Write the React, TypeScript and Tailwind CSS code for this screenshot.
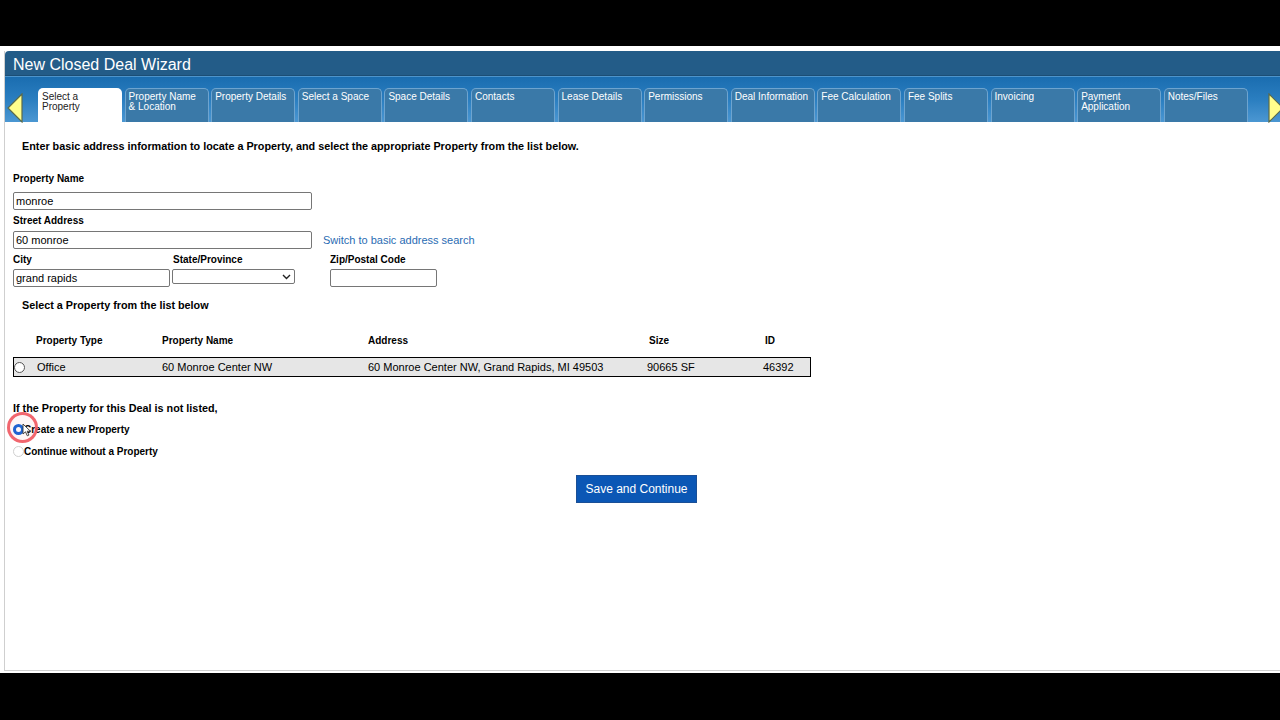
import React from 'react';

const tabs = [
  'Property Name\n& Location',
  'Property Details',
  'Select a Space',
  'Space Details',
  'Contacts',
  'Lease Details',
  'Permissions',
  'Deal Information',
  'Fee Calculation',
  'Fee Splits',
  'Invoicing',
  'Payment\nApplication',
  'Notes/Files',
];

function Radio({ checked = false, faint = false }: { checked?: boolean; faint?: boolean }) {
  if (checked) {
    return (
      <span className="inline-flex w-[11px] h-[11px] rounded-full bg-[#1565d8] items-center justify-center shrink-0">
        <span className="w-[5px] h-[5px] rounded-full bg-white" />
      </span>
    );
  }
  return (
    <span
      className={`inline-block w-[11px] h-[11px] rounded-full border bg-white shrink-0 ${
        faint ? 'border-[#d0d0d0]' : 'border-[#555]'
      }`}
    />
  );
}

function TextBox({ value = '', width }: { value?: string; width: string }) {
  return (
    <div
      className={`${width} h-[18px] border border-[#767676] rounded-[2px] bg-white px-[2px] text-[11px] leading-[16px] text-black`}
    >
      {value}
    </div>
  );
}

export default function App() {
  return (
    <div className="w-[1280px] h-[720px] bg-black flex flex-col font-['Liberation_Sans',Arial,sans-serif] overflow-hidden">
      <div className="h-[46px] shrink-0" />
      <div className="h-[627px] bg-white pt-[5px] pl-[4px] flex flex-col">
        <div className="relative flex-1 border-l border-b border-[#cfcfcf] mb-[2px] flex flex-col">
          {/* header */}
          <div className="h-[25px] bg-[#235c88] rounded-tl-[4px] border-b border-[#1c4e75] px-[8px] pt-[3px] flex items-center text-white text-[16px] leading-none">
            New Closed Deal Wizard
          </div>

          {/* tab strip */}
          <div className="h-[46px] bg-gradient-to-b from-[#1a6db0] via-[#2a7ec0] to-[#4b97d2] border-t border-[#4d94cb] flex items-end relative">
            <svg className="absolute left-[2px] top-[16px]" width="16" height="30" viewBox="0 0 16 30">
              <path d="M15 1 L1 15 L15 29 Z" fill="#fffe8c" stroke="#5b6b4a" strokeWidth="1.2" />
            </svg>
            <div className="flex gap-[2.6px] ml-[33px] h-[34px]">
              <div className="w-[84px] h-[34px] bg-white rounded-t-[5px] px-[4px] pt-[4px] text-[10px] leading-[10px] text-[#222]">
                Select a<br />Property
              </div>
              {tabs.map((t) => (
                <div
                  key={t}
                  className="w-[84px] h-[34px] bg-[#3a79a8] border border-b-0 border-[#6ea4cf] rounded-t-[5px] px-[3px] pt-[3px] text-[10px] leading-[10px] text-white whitespace-pre-line"
                >
                  {t}
                </div>
              ))}
            </div>
            <svg className="absolute right-0 top-[16px]" width="12" height="30" viewBox="0 0 12 30">
              <path d="M1 1 L15 15 L1 29 Z" fill="#fffe8c" stroke="#5b6b4a" strokeWidth="1.2" />
            </svg>
          </div>

          {/* body */}
          <div className="flex flex-col pl-[8px] text-[10px] text-black">
            <div className="mt-[17px] ml-[9px] h-[12px] leading-[14px] text-[10.8px] font-bold">
              Enter basic address information to locate a Property, and select the appropriate Property from the list below.
            </div>

            <div className="mt-[21px] h-[12px] leading-[14px] font-bold">Property Name</div>
            <div className="mt-[8px]">
              <TextBox value="monroe" width="w-[299px]" />
            </div>

            <div className="mt-[4px] h-[12px] leading-[14px] font-bold">Street Address</div>
            <div className="mt-[5px] flex items-center">
              <TextBox value="60 monroe" width="w-[299px]" />
              <span className="ml-[11px] text-[11px] text-[#2a6cb3]">Switch to basic address search</span>
            </div>

            <div className="mt-[4px] flex h-[12px] leading-[14px] font-bold">
              <span className="w-[160px]">City</span>
              <span className="w-[157px]">State/Province</span>
              <span>Zip/Postal Code</span>
            </div>
            <div className="mt-[4px] flex items-start">
              <TextBox value="grand rapids" width="w-[157px]" />
              <div className="ml-[2px] w-[123px] h-[15px] border border-[#767676] rounded-[2px] flex items-center justify-end pr-[3px]">
                <svg width="9" height="6" viewBox="0 0 9 6">
                  <path d="M1 1 L4.5 4.5 L8 1" fill="none" stroke="#222" strokeWidth="1.4" />
                </svg>
              </div>
              <div className="ml-[35px]">
                <TextBox width="w-[107px]" />
              </div>
            </div>

            <div className="mt-[11px] ml-[9px] h-[12px] leading-[14px] text-[10.8px] font-bold">Select a Property from the list below</div>

            {/* table */}
            <div className="mt-[24px] w-[798px] h-[12px] leading-[14px] font-bold grid grid-cols-[23px_126px_206px_281px_116px_1fr]">
              <span />
              <span>Property Type</span>
              <span>Property Name</span>
              <span>Address</span>
              <span>Size</span>
              <span>ID</span>
            </div>
            <div className="mt-[11px] w-[798px] h-[20px] border border-black bg-[#e6e6e6] text-[11px] grid grid-cols-[23px_125px_206px_279px_116px_1fr] items-center">
              <span className="flex">
                <Radio />
              </span>
              <span>Office</span>
              <span>60 Monroe Center NW</span>
              <span>60 Monroe Center NW, Grand Rapids, MI 49503</span>
              <span>90665 SF</span>
              <span>46392</span>
            </div>

            <div className="mt-[24px] h-[12px] leading-[14px] text-[10.8px] font-bold">If the Property for this Deal is not listed,</div>
            <div className="mt-[10px] h-[12px] flex items-center font-bold">
              <Radio checked />
              <span>Create a new Property</span>
            </div>
            <div className="mt-[10px] h-[12px] flex items-center font-bold">
              <Radio faint />
              <span>Continue without a Property</span>
            </div>

            <div className="mt-[18px] ml-[563px]">
              <button className="w-[121px] h-[28px] bg-[#0b57b5] border border-[#1a4f96] text-white text-[12px]">
                Save and Continue
              </button>
            </div>
          </div>

          {/* click highlight */}
          <div className="absolute left-[2px] top-[361px] w-[31px] h-[31px] rounded-full border-[3px] border-[#f0565f]/90 bg-[#ee4a55]/5" />
          <svg className="absolute left-[17px] top-[372px]" width="10" height="14" viewBox="0 0 10 14">
            <path d="M1 1 L1 11 L3.5 8.8 L5.3 12.8 L6.9 12.1 L5.2 8.2 L8.4 8.2 Z" fill="#fff" stroke="#333" strokeWidth="0.9" />
          </svg>
        </div>
      </div>
      <div className="flex-1" />
    </div>
  );
}
